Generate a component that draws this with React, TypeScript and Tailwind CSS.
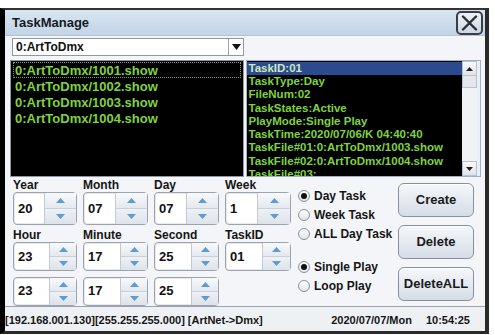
import React from "react";

const font = { fontFamily: '"Liberation Sans", Arial, sans-serif' };

const leftItems = [
  "0:ArtToDmx/1001.show",
  "0:ArtToDmx/1002.show",
  "0:ArtToDmx/1003.show",
  "0:ArtToDmx/1004.show",
];

const infoLines = [
  "TaskID:01",
  "TaskType:Day",
  "FileNum:02",
  "TaskStates:Active",
  "PlayMode:Single Play",
  "TaskTime:2020/07/06/K 04:40:40",
  "TaskFile#01:0:ArtToDmx/1003.show",
  "TaskFile#02:0:ArtToDmx/1004.show",
  "TaskFile#03:",
];

const Tri = ({ up }: { up?: boolean }) => (
  <svg width="9" height="5" viewBox="0 0 9 5">
    <path d={up ? "M0 5 L4.5 0 L9 5 Z" : "M0 0 L4.5 5 L9 0 Z"} fill="#5d9ad6" />
  </svg>
);

const Spinner = ({ value, tall, spinW }: { value: string; tall?: boolean; spinW: string }) => (
  <div
    className={`flex ${tall ? "h-[33px]" : "h-[29px]"} rounded-[4px] border border-[#9aa3ae] bg-white shadow-[inset_0_0_0_1px_#e6eaef]`}
  >
    <div className="flex flex-1 items-center pl-[4px] text-[13px] font-bold text-[#111]">{value}</div>
    <div className={`${spinW} flex flex-col border-l border-[#c3cad3]`}>
      <div className="flex flex-1 items-center justify-center border-b border-[#c9d0d8] bg-gradient-to-b from-[#f8f9fb] to-[#e4e9ef]">
        <Tri up />
      </div>
      <div className="flex flex-1 items-center justify-center bg-gradient-to-b from-[#eef1f5] to-[#dde3ea]">
        <Tri />
      </div>
    </div>
  </div>
);

const Radio = ({ label, on, className }: { label: string; on?: boolean; className?: string }) => (
  <div className={`flex h-[19px] items-center gap-[4px] ${className ?? ""}`}>
    <div className="flex h-[12px] w-[12px] items-center justify-center rounded-full border border-[#8a929c] bg-gradient-to-b from-[#ffffff] to-[#dfe4ea]">
      {on && <div className="h-[6px] w-[6px] rounded-full bg-[#111]" />}
    </div>
    <span className="text-[12px] font-bold text-[#151515]">{label}</span>
  </div>
);

const Btn = ({ label }: { label: string }) => (
  <div className="flex h-[34px] w-[76px] items-center justify-center rounded-[6px] border border-[#8691a0] bg-gradient-to-b from-[#f5f7fa] to-[#d6dde7] text-[13px] font-bold text-[#1a1a1a] shadow-[inset_0_1px_0_#ffffff]">
    {label}
  </div>
);

export default function App() {
  return (
    <div className="h-[335px] w-[495px] overflow-hidden bg-white pt-[8px]" style={font}>
      <div className="flex h-[326px] w-[489px] flex-col border-b-[3px] border-l-[5px] border-r-[4px] border-t-[2px] border-b-[#2a2a2a] border-l-black border-r-[#2a2a2a] border-t-[#333] bg-[#f3f5f8]">
        {/* title bar */}
        <div className="flex h-[26px] items-center justify-between border-b border-[#b3c3d6] bg-gradient-to-b from-[#d9e5f1] to-[#c3d4e7] pl-[7px] pr-[2px]">
          <span className="text-[13px] font-bold text-[#141a22]">TaskManage</span>
          <div className="flex h-[24px] w-[27px] items-center justify-center rounded-[5px] border-2 border-[#3a3f47] bg-gradient-to-b from-[#eef2f7] to-[#cdd7e3]">
            <svg width="17" height="16" viewBox="0 0 17 16">
              <path d="M2 1.5 L15 14.5 M15 1.5 L2 14.5" stroke="#2b2f35" strokeWidth="2.4" strokeLinecap="round" />
            </svg>
          </div>
        </div>

        {/* body */}
        <div className="flex h-[270px] flex-col pl-[5px] pr-[4px]">
          <div className="ml-[2px] mt-[2px] flex h-[18px] w-[232px] items-center border border-[#8e98a4] bg-white">
            <span className="flex-1 pl-[3px] text-[12px] font-bold text-[#111]">0:ArtToDmx</span>
            <div className="flex h-full w-[15px] items-center justify-center border-l border-[#9aa3ae]">
              <svg width="9" height="6" viewBox="0 0 9 6">
                <path d="M0 0 L9 0 L4.5 6 Z" fill="#111" />
              </svg>
            </div>
          </div>

          <div className="mt-[4px] flex h-[117px] gap-[2px]">
            <div className="w-[234px] border border-[#8e98a4] bg-black pl-[2px] pr-[2px] pt-[1px]">
              {leftItems.map((t, i) => (
                <div
                  key={t}
                  className={`flex h-[16px] items-center pl-[1px] text-[13px] font-bold leading-none text-[#7fd33d] ${
                    i === 0 ? "border border-dotted border-[#8a8a8a]" : "border border-transparent"
                  }`}
                >
                  {t}
                </div>
              ))}
            </div>
            <div className="flex w-[236px] border border-[#9fb0c4] bg-[#e9eff6] pr-[3px]">
              <div className="h-full flex-1 overflow-hidden bg-black pt-[1px]">
                {infoLines.map((t, i) => (
                  <div
                    key={t}
                    className={`flex h-[13.25px] items-center whitespace-nowrap pl-[2px] text-[11.5px] font-bold leading-none ${
                      i === 0 ? "bg-[#2c4a8e] text-[#cfe8bd]" : "text-[#7fd33d]"
                    }`}
                  >
                    {t}
                  </div>
                ))}
              </div>
              <div className="flex w-[15px] flex-col bg-[#f0f2f5]">
                <div className="flex h-[15px] items-center justify-center border border-[#b9c1cb] bg-gradient-to-b from-[#fafbfc] to-[#dfe4ea]">
                  <svg width="7" height="4" viewBox="0 0 7 4">
                    <path d="M0 4 L3.5 0 L7 4 Z" fill="#222" />
                  </svg>
                </div>
                <div className="h-[12px] border-x border-b border-[#b9c1cb] bg-[#e3e8ee]" />
                <div className="flex-1" />
                <div className="flex h-[15px] items-center justify-center border border-[#b9c1cb] bg-gradient-to-b from-[#fafbfc] to-[#dfe4ea]">
                  <svg width="7" height="4" viewBox="0 0 7 4">
                    <path d="M0 0 L3.5 4 L7 0 Z" fill="#222" />
                  </svg>
                </div>
              </div>
            </div>
          </div>

          {/* form */}
          <div className="flex flex-1">
            <div className="ml-[3px] grid w-[279px] grid-cols-[64px_65px_65px_66px] gap-x-[6px]">
              {["Year", "Month", "Day", "Week"].map((l) => (
                <div key={l} className="flex h-[15px] items-end pb-[1px] text-[12px] font-bold leading-none text-[#151515]">
                  {l}
                </div>
              ))}
              <Spinner value="20" tall spinW="w-[32px]" />
              <Spinner value="07" tall spinW="w-[32px]" />
              <Spinner value="07" tall spinW="w-[32px]" />
              <Spinner value="1" tall spinW="w-[33px]" />
              {["Hour", "Minute", "Second", "TaskID"].map((l) => (
                <div key={l} className="flex h-[16px] items-end pb-[1px] text-[12px] font-bold leading-none text-[#151515]">
                  {l}
                </div>
              ))}
              <Spinner value="23" spinW="w-[27px]" />
              <Spinner value="17" spinW="w-[27px]" />
              <Spinner value="25" spinW="w-[27px]" />
              <Spinner value="01" spinW="w-[28px]" />
              <div className="col-span-4 h-[5px]" />
              <Spinner value="23" spinW="w-[27px]" />
              <Spinner value="17" spinW="w-[27px]" />
              <Spinner value="25" spinW="w-[27px]" />
            </div>

            <div className="ml-[6px] flex w-[100px] flex-col pt-[9px]">
              <Radio label="Day Task" on />
              <Radio label="Week Task" />
              <Radio label="ALL Day Task" />
              <Radio label="Single Play" on className="mt-[14px]" />
              <Radio label="Loop Play" />
            </div>

            <div className="flex flex-col gap-[8px] pt-[6px]">
              <Btn label="Create" />
              <Btn label="Delete" />
              <Btn label="DeleteALL" />
            </div>
          </div>
        </div>

        {/* status bar */}
        <div className="flex flex-1 items-center border-t border-[#9aa3ae] bg-[#eef1f4] pr-[15px] pt-[2px] text-[11px] font-bold text-[#151515]">
          <span className="whitespace-pre">[192.168.001.130][255.255.255.000] [ArtNet-&gt;Dmx]</span>
          <span className="ml-auto">2020/07/07/Mon</span>
          <span className="ml-[14px]">10:54:25</span>
        </div>
      </div>
    </div>
  );
}
